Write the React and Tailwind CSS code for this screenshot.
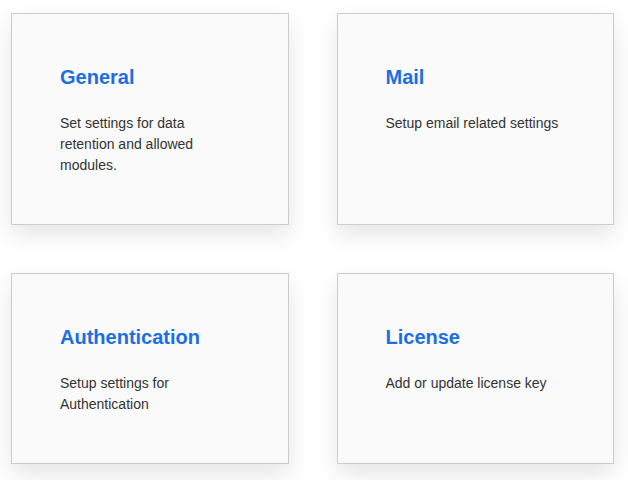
import React from 'react';

const cards = [
  { title: 'General', text: 'Set settings for data retention and allowed modules.' },
  { title: 'Mail', text: 'Setup email related settings' },
  { title: 'Authentication', text: 'Setup settings for Authentication' },
  { title: 'License', text: 'Add or update license key' },
];

export default function App() {
  return (
    <div className="min-h-screen bg-white pl-[11px] pt-[13px] font-['Liberation_Sans',Arial,sans-serif]">
      <div className="grid w-[603px] grid-cols-2 gap-x-12 gap-y-12">
        {cards.map((card) => (
          <div
            key={card.title}
            className="border border-[#cccccc] bg-[#fafafa] px-12 pt-[49px] pb-[48px] shadow-[0_10px_22px_rgba(0,0,0,0.1)]"
          >
            <h2 className="mb-[22px] text-[20px] leading-7 font-bold text-[#1a6fe4]">{card.title}</h2>
            <p className="text-[14px] leading-[21px] text-[#333333]">{card.text}</p>
          </div>
        ))}
      </div>
    </div>
  );
}
